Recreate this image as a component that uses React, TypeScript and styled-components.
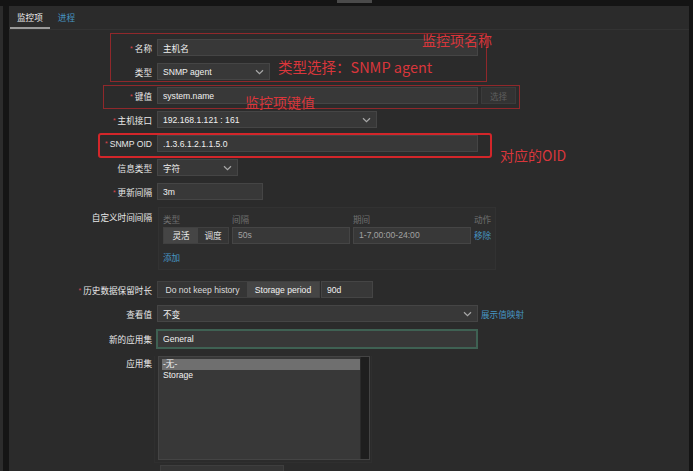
import React, { FC } from 'react';
import styled, { createGlobalStyle } from 'styled-components';

const GlobalStyle = createGlobalStyle`
    html, body {
        margin: 0;
        padding: 0;
        background: #141414;
    }
    * {
        box-sizing: border-box;
    }
`;

const FONT = `"Liberation Sans", "Noto Sans CJK SC", sans-serif`;

const PageStyled = styled.div`
    position: relative;
    width: 693px;
    height: 471px;
    overflow: hidden;
    display: flex;
    flex-direction: column;
    background: #141414;
    font-family: ${FONT};
    font-size: 8.6px;
    color: #f0f0f0;
`;

const TopBar = styled.div`
    height: 6px;
    flex: none;
    display: flex;
`;

const TopNotch = styled.div`
    margin-left: 337px;
    width: 35px;
    height: 3px;
    background: #4a4a4a;
`;

const Body = styled.div`
    flex: 1;
    display: flex;
    min-height: 0;
`;

const LeftRail = styled.div`
    width: 9px;
    flex: none;
    background: linear-gradient(to right, #2c2c2c 0, #2c2c2c 3px, #151515 3px, #151515 100%);
`;

const Main = styled.div`
    flex: 1;
    margin-right: 4px;
    background: #2b2b2b;
    display: flex;
    flex-direction: column;
`;

const TabBar = styled.div`
    height: 24px;
    flex: none;
    display: flex;
    align-items: stretch;
    padding-left: 1px;
    border-bottom: 1px solid #333333;
`;

const Tab = styled.div<{ $active?: boolean }>`
    display: flex;
    align-items: center;
    padding: 1px 7px 0 7px;
    margin-right: 1px;
    color: ${(p) => (p.$active ? '#f2f2f2' : '#4796c4')};
    border-bottom: 2px solid ${(p) => (p.$active ? '#9a9a9a' : 'transparent')};
`;

const Form = styled.div`
    display: flex;
    flex-direction: column;
    gap: 7px;
    padding-top: 9px;
`;

const Row = styled.div<{ $top?: boolean; $extra?: number }>`
    display: grid;
    grid-template-columns: 143px 1fr;
    column-gap: 5px;
    align-items: ${(p) => (p.$top ? 'start' : 'center')};
    margin-top: ${(p) => p.$extra || 0}px;
`;

const Label = styled.div<{ $pad?: number }>`
    text-align: right;
    color: #e8e8e8;
    white-space: nowrap;
    padding-top: ${(p) => p.$pad || 0}px;
`;

const Star = styled.span`
    color: #d9464d;
    font-size: 7px;
    margin-right: 2px;
    position: relative;
    top: -1px;
`;

const Field = styled.div`
    display: flex;
    align-items: center;
    gap: 3px;
`;

const Input = styled.input<{ $w: number; $focus?: boolean; $dim?: boolean }>`
    width: ${(p) => p.$w}px;
    height: ${(p) => (p.$focus ? 20 : 17)}px;
    padding: 0 5px;
    background: #383838;
    border: ${(p) => (p.$focus ? '2px solid #3f6153' : '1px solid #454545')};
    color: ${(p) => (p.$dim ? '#a2a2a2' : '#f0f0f0')};
    font-family: ${FONT};
    font-size: 8.6px;
    outline: none;
    margin: 0;
`;

const SelectBox = styled.div<{ $w: number }>`
    width: ${(p) => p.$w}px;
    height: 17px;
    padding: 0 5px;
    background: #383838;
    border: 1px solid #454545;
    display: flex;
    align-items: center;
    justify-content: space-between;
    color: #f0f0f0;
`;

const GhostButton = styled.div`
    width: 35px;
    height: 17px;
    display: flex;
    align-items: center;
    justify-content: center;
    background: #333333;
    border: 1px solid #3b3b3b;
    color: #5e5e5e;
`;

const Link = styled.span`
    color: #4796c4;
    white-space: nowrap;
`;

const Segmented = styled.div`
    display: flex;
    height: 17px;
    border: 1px solid #404040;
    background: #353535;
`;

const Segment = styled.div<{ $on?: boolean; $w: number }>`
    width: ${(p) => p.$w}px;
    display: flex;
    align-items: center;
    justify-content: center;
    background: ${(p) => (p.$on ? '#454545' : 'transparent')};
    color: ${(p) => (p.$on ? '#f2f2f2' : '#dcdcdc')};
`;

const IntervalBox = styled.div`
    width: 338px;
    height: 63px;
    margin-left: 1px;
    padding: 3px 4px 0 4px;
    background: #2d2d2d;
    border: 1px solid #323232;
    display: grid;
    grid-template-columns: 66px 118px 118px auto;
    grid-template-rows: 15px 18px 20px;
    column-gap: 3px;
    align-items: center;
`;

const HeadCell = styled.div`
    color: #6f6f6f;
`;

const AddCell = styled.div`
    grid-column: 1 / -1;
    padding-top: 6px;
`;

const ListFrame = styled.div`
    width: 218px;
    margin-left: -3px;
    padding: 0 3px 2px 3px;
    border: 1px solid #2f2f2f;
    border-top: none;
`;

const ListBox = styled.div`
    width: 212px;
    height: 104px;
    background: #383838;
    border: 1px solid #444444;
    display: flex;
`;

const ListItems = styled.div`
    flex: 1;
    padding: 2px 0 0 3px;
    display: flex;
    flex-direction: column;
`;

const ListItem = styled.div<{ $on?: boolean }>`
    height: 11px;
    line-height: 11px;
    padding-left: 1px;
    background: ${(p) => (p.$on ? '#6f6f6f' : 'transparent')};
    color: #f2f2f2;
`;

const ScrollStrip = styled.div`
    width: 9px;
    background: #1e1e1e;
    border-left: 1px solid #2a2a2a;
`;

const BottomStub = styled.div`
    width: 124px;
    height: 12px;
    margin-left: 3px;
    background: #353535;
    border: 1px solid #3e3e3e;
`;

const Frame = styled.div<{ $x: number; $y: number; $w: number; $h: number; $strong?: boolean }>`
    position: absolute;
    left: ${(p) => p.$x}px;
    top: ${(p) => p.$y}px;
    width: ${(p) => p.$w}px;
    height: ${(p) => p.$h}px;
    border: ${(p) => (p.$strong ? '2.5px solid #d3262a' : '1.5px solid rgba(170, 40, 44, 0.8)')};
    border-radius: ${(p) => (p.$strong ? 3 : 0)}px;
    pointer-events: none;
`;

const Note = styled.div<{ $x: number; $y: number; $size: number }>`
    position: absolute;
    left: ${(p) => p.$x}px;
    top: ${(p) => p.$y}px;
    font-family: "Noto Sans CJK SC", "Liberation Sans", sans-serif;
    font-size: ${(p) => p.$size}px;
    line-height: 1;
    color: #d9363b;
    white-space: nowrap;
`;

const Chevron: FC = () => (
    <svg width="9" height="6" viewBox="0 0 9 6">
        <path d="M1 1.2 L4.5 4.6 L8 1.2" fill="none" stroke="#a8a8a8" strokeWidth="1.2" />
    </svg>
);

const Select: FC<{ w: number; value: string }> = ({ w, value }) => (
    <SelectBox $w={w}>
        <span>{value}</span>
        <Chevron />
    </SelectBox>
);

const FieldLabel: FC<{ text: string; required?: boolean; pad?: number }> = ({ text, required, pad }) => (
    <Label $pad={pad}>
        {required && <Star>*</Star>}
        {text}
    </Label>
);

export default function App() {
    return (
        <>
            <GlobalStyle />
            <PageStyled>
                <TopBar>
                    <TopNotch />
                </TopBar>
                <Body>
                    <LeftRail />
                    <Main>
                        <TabBar>
                            <Tab $active>监控项</Tab>
                            <Tab>进程</Tab>
                        </TabBar>

                        <Form>
                            <Row>
                                <FieldLabel text="名称" required />
                                <Field><Input $w={321} readOnly value="主机名" /></Field>
                            </Row>
                            <Row>
                                <FieldLabel text="类型" />
                                <Field><Select w={113} value="SNMP agent" /></Field>
                            </Row>
                            <Row>
                                <FieldLabel text="键值" required />
                                <Field>
                                    <Input $w={321} readOnly value="system.name" />
                                    <GhostButton>选择</GhostButton>
                                </Field>
                            </Row>
                            <Row>
                                <FieldLabel text="主机接口" required />
                                <Field><Select w={220} value="192.168.1.121 : 161" /></Field>
                            </Row>
                            <Row>
                                <FieldLabel text="SNMP OID" required />
                                <Field><Input $w={321} readOnly value=".1.3.6.1.2.1.1.5.0" /></Field>
                            </Row>
                            <Row>
                                <FieldLabel text="信息类型" />
                                <Field><Select w={81} value="字符" /></Field>
                            </Row>
                            <Row>
                                <FieldLabel text="更新间隔" required />
                                <Field><Input $w={106} readOnly value="3m" /></Field>
                            </Row>
                            <Row $top>
                                <FieldLabel text="自定义时间间隔" pad={4} />
                                <IntervalBox>
                                    <HeadCell>类型</HeadCell>
                                    <HeadCell>间隔</HeadCell>
                                    <HeadCell>期间</HeadCell>
                                    <HeadCell>动作</HeadCell>
                                    <Segmented>
                                        <Segment $on $w={34}>灵活</Segment>
                                        <Segment $w={30}>调度</Segment>
                                    </Segmented>
                                    <Input $w={118} $dim readOnly value="50s" />
                                    <Input $w={118} $dim readOnly value="1-7,00:00-24:00" />
                                    <Link>移除</Link>
                                    <AddCell><Link>添加</Link></AddCell>
                                </IntervalBox>
                            </Row>
                            <Row $extra={4}>
                                <FieldLabel text="历史数据保留时长" required />
                                <Field>
                                    <Segmented>
                                        <Segment $w={89}>Do not keep history</Segment>
                                        <Segment $on $w={72}>Storage period</Segment>
                                    </Segmented>
                                    <Input $w={52} readOnly value="90d" style={{ marginLeft: -2 }} />
                                </Field>
                            </Row>
                            <Row>
                                <FieldLabel text="查看值" />
                                <Field>
                                    <Select w={321} value="不变" />
                                    <Link>展示值映射</Link>
                                </Field>
                            </Row>
                            <Row>
                                <FieldLabel text="新的应用集" />
                                <Field><Input $w={322} $focus readOnly value="General" style={{ marginLeft: -1 }} /></Field>
                            </Row>
                            <Row $top>
                                <FieldLabel text="应用集" pad={1} />
                                <ListFrame>
                                    <ListBox>
                                        <ListItems>
                                            <ListItem $on>-无-</ListItem>
                                            <ListItem>Storage</ListItem>
                                        </ListItems>
                                        <ScrollStrip />
                                    </ListBox>
                                </ListFrame>
                            </Row>
                            <Row style={{ marginTop: -5 }}>
                                <span />
                                <BottomStub />
                            </Row>
                        </Form>
                    </Main>
                </Body>

                <Frame $x={110} $y={33} $w={377} $h={49} />
                <Frame $x={103} $y={85} $w={417} $h={24} />
                <Frame $x={98} $y={133} $w={394} $h={25} $strong />

                <Note $x={422} $y={33} $size={14}>监控项名称</Note>
                <Note $x={278} $y={60} $size={14.5}>类型选择：SNMP agent</Note>
                <Note $x={245} $y={95} $size={14}>监控项键值</Note>
                <Note $x={500} $y={148} $size={14}>对应的OID</Note>
            </PageStyled>
        </>
    );
}
